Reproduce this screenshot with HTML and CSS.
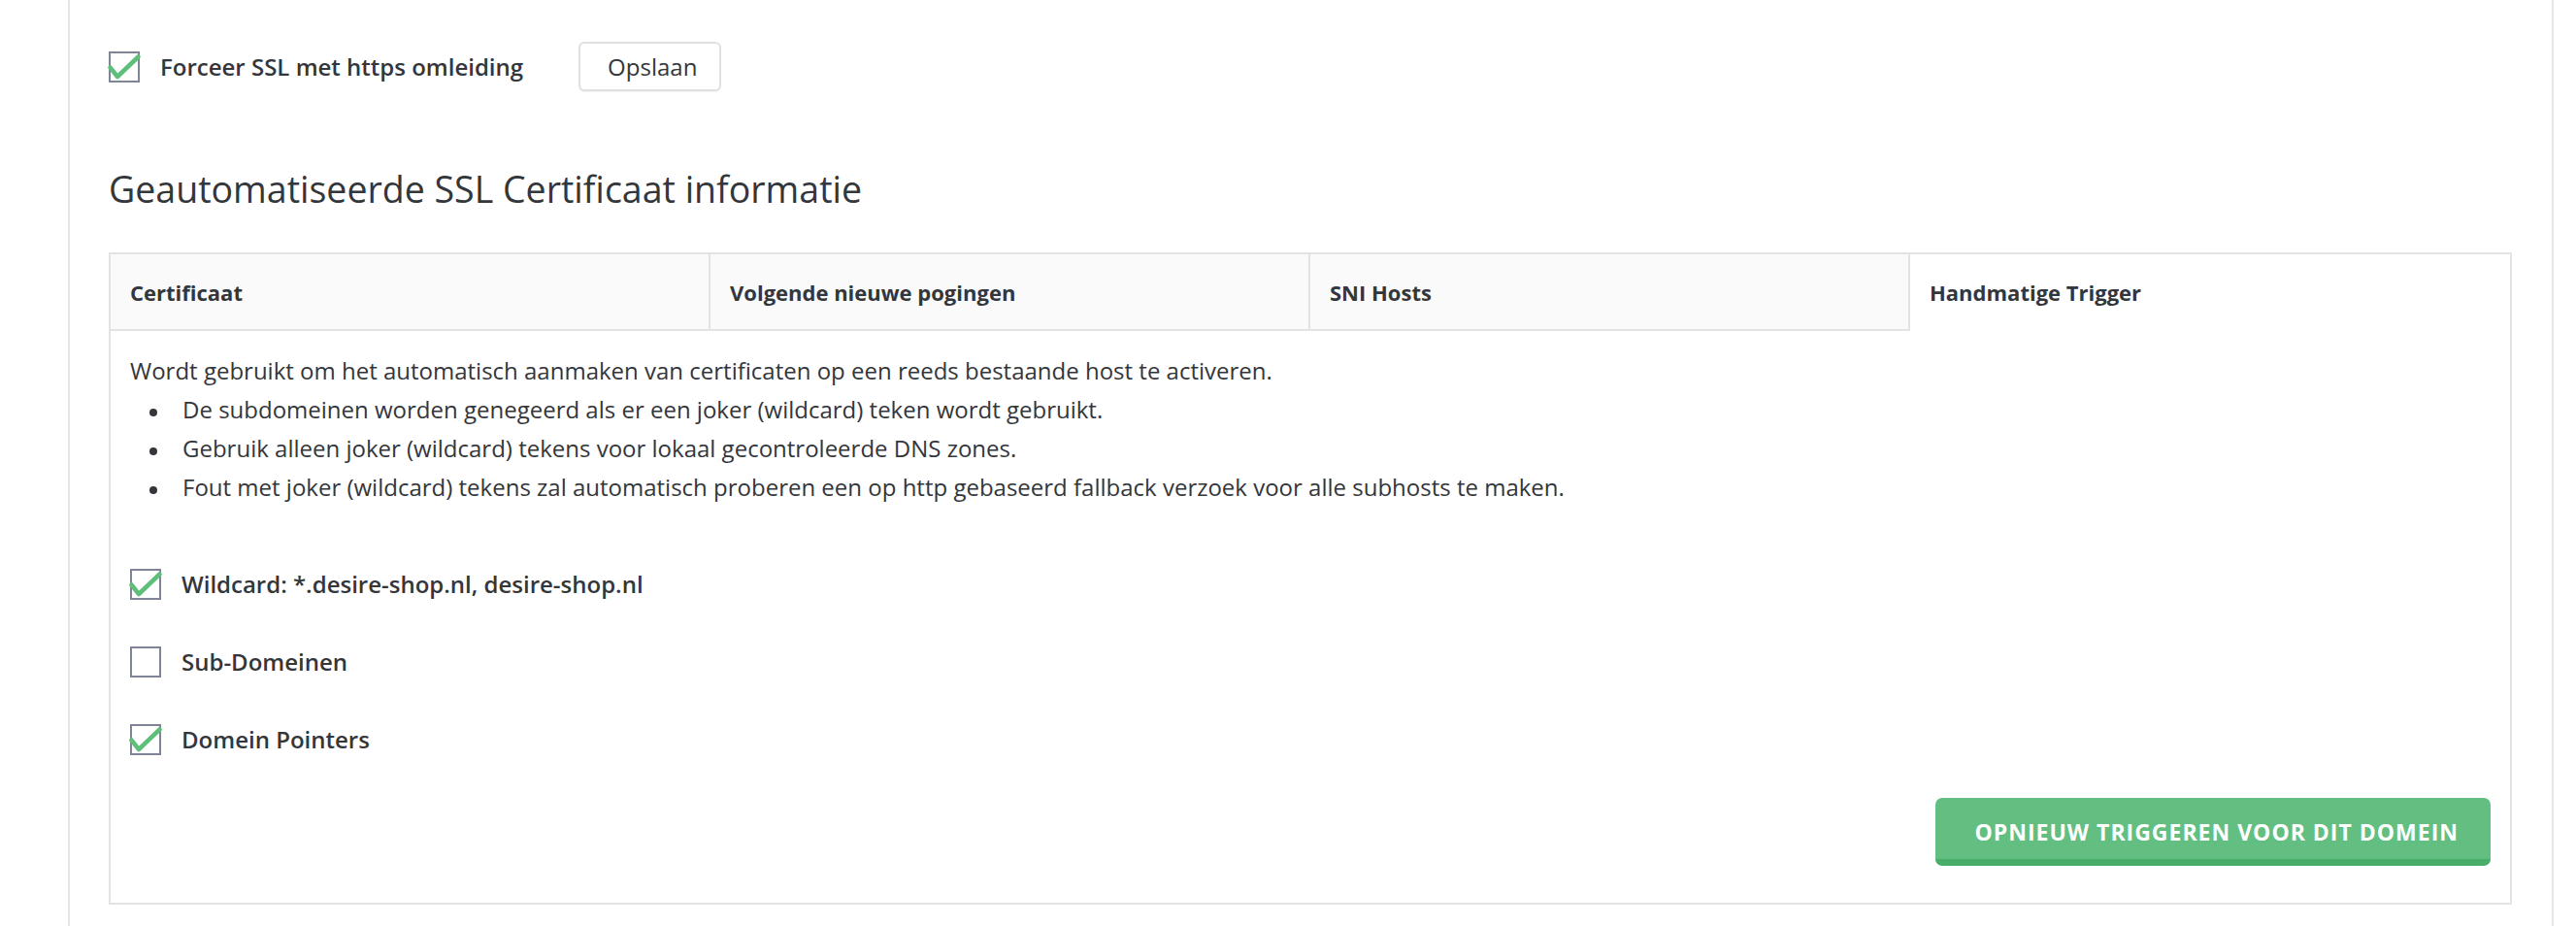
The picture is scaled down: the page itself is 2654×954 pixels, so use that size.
FILE: index.html
```html
<!DOCTYPE html>
<html lang="nl">
<head>
    <meta charset="UTF-8" />
    <title>SSL Certificaten</title>
    <link rel="stylesheet" href="styles.css">
</head>
<body>
    <div class="panel">
        <div class="force-row">
            <label class="check">
                <span class="box">
                    <svg viewBox="0 0 32 32" width="32" height="32"><rect x="1" y="1" width="30" height="30" fill="#fff" stroke="#7d8597" stroke-width="2"/><path d="M1.5 16.5 L9 26 L30.5 5.5" fill="none" stroke="#5ebf7b" stroke-width="4.5" stroke-linecap="round" stroke-linejoin="round"/></svg>
                </span>
                <span class="check-label">Forceer SSL met https omleiding</span>
            </label>
            <button class="btn-save">Opslaan</button>
        </div>

        <h2 class="section-title">Geautomatiseerde SSL Certificaat informatie</h2>

        <div class="tabs">
            <div class="tab-row">
                <div class="tab">Certificaat</div>
                <div class="tab">Volgende nieuwe pogingen</div>
                <div class="tab">SNI Hosts</div>
                <div class="tab active">Handmatige Trigger</div>
            </div>

            <div class="tab-body">
                <p class="intro">Wordt gebruikt om het automatisch aanmaken van certificaten op een reeds bestaande host te activeren.</p>
                <ul class="notes">
                    <li>De subdomeinen worden genegeerd als er een joker (wildcard) teken wordt gebruikt.</li>
                    <li>Gebruik alleen joker (wildcard) tekens voor lokaal gecontroleerde DNS zones.</li>
                    <li>Fout met joker (wildcard) tekens zal automatisch proberen een op http gebaseerd fallback verzoek voor alle subhosts te maken.</li>
                </ul>

                <div class="options">
                    <label class="check">
                        <span class="box">
                            <svg viewBox="0 0 32 32" width="32" height="32"><rect x="1" y="1" width="30" height="30" fill="#fff" stroke="#7d8597" stroke-width="2"/><path d="M1.5 16.5 L9 26 L30.5 5.5" fill="none" stroke="#5ebf7b" stroke-width="4.5" stroke-linecap="round" stroke-linejoin="round"/></svg>
                        </span>
                        <span class="check-label">Wildcard: *.desire-shop.nl, desire-shop.nl</span>
                    </label>
                    <label class="check">
                        <span class="box">
                            <svg viewBox="0 0 32 32" width="32" height="32"><rect x="1" y="1" width="30" height="30" fill="#fff" stroke="#7d8597" stroke-width="2"/></svg>
                        </span>
                        <span class="check-label">Sub-Domeinen</span>
                    </label>
                    <label class="check">
                        <span class="box">
                            <svg viewBox="0 0 32 32" width="32" height="32"><rect x="1" y="1" width="30" height="30" fill="#fff" stroke="#7d8597" stroke-width="2"/><path d="M1.5 16.5 L9 26 L30.5 5.5" fill="none" stroke="#5ebf7b" stroke-width="4.5" stroke-linecap="round" stroke-linejoin="round"/></svg>
                        </span>
                        <span class="check-label">Domein Pointers</span>
                    </label>
                </div>

                <div class="actions">
                    <button class="btn-trigger">Opnieuw triggeren voor dit domein</button>
                </div>
            </div>
        </div>
    </div>
</body>
</html>
```

FILE: styles.css
```css
body {
    margin: 0;
    padding: 0;
    font-family: 'Open Sans', 'Noto Sans', sans-serif;
    font-size: 24px;
    color: #33363b;
    background-color: #fff;
}

.panel {
    box-sizing: border-box;
    margin-left: 70px;
    width: 2561px;
    min-height: 954px;
    border-left: 2px solid #e6e6e6;
    border-right: 2px solid #e6e6e6;
    padding: 43px 41px 0 40px;
}

/* CHECKBOXES */
.check {
    display: flex;
    align-items: center;
    gap: 21px;
    font-weight: 600;
    cursor: pointer;
}

.box {
    display: block;
    width: 32px;
    height: 32px;
    flex-shrink: 0;
}

.box svg {
    display: block;
    overflow: visible;
}

/* FILA SUPERIOR */
.force-row {
    display: flex;
    align-items: center;
    height: 51px;
}

.btn-save {
    margin-left: 57px;
    height: 51px;
    padding: 0 23px 0 28px;
    font-family: inherit;
    font-size: 24px;
    color: #33363b;
    background: #fff;
    border: 2px solid #e0e0e0;
    border-radius: 6px;
    box-shadow: 0 1px 1px rgba(0, 0, 0, 0.05);
}

.section-title {
    margin: 78px 0 42px;
    font-size: 37.5px;
    line-height: 46px;
    font-weight: 400;
    color: #33363b;
}

/* PESTAÑAS */
.tabs {
    border: 2px solid #e3e3e3;
}

.tab-row {
    display: grid;
    grid-template-columns: repeat(4, 1fr);
}

.tab {
    height: 77px;
    display: flex;
    align-items: center;
    padding: 0 20px;
    font-size: 22px;
    font-weight: 700;
    background: #fafafa;
    border-bottom: 2px solid #e3e3e3;
    border-right: 2px solid #e3e3e3;
}

.tab:last-child {
    border-right: none;
}

.tab.active {
    background: #fff;
    border-bottom-color: transparent;
}

.tab-body {
    padding: 21px 20px 38px;
    line-height: 40px;
}

.intro {
    margin: 0;
}

.notes {
    margin: 0;
    padding-left: 54px;
    list-style: none;
}

.notes li::before {
    content: '';
    display: inline-block;
    width: 8px;
    height: 8px;
    border-radius: 50%;
    background: #33363b;
    margin-left: -34px;
    margin-right: 26px;
    vertical-align: middle;
}

.options {
    display: flex;
    flex-direction: column;
    gap: 40px;
    margin-top: 60px;
}

.actions {
    display: flex;
    justify-content: flex-end;
    margin-top: 40px;
}

.btn-trigger {
    height: 70px;
    padding: 7px 33px 0 41px;
    font-family: inherit;
    font-size: 23px;
    font-weight: 700;
    letter-spacing: 1px;
    text-transform: uppercase;
    color: #fff;
    background: #62bf81;
    border: none;
    border-bottom: 7px solid #48ad69;
    border-radius: 7px;
}
```
